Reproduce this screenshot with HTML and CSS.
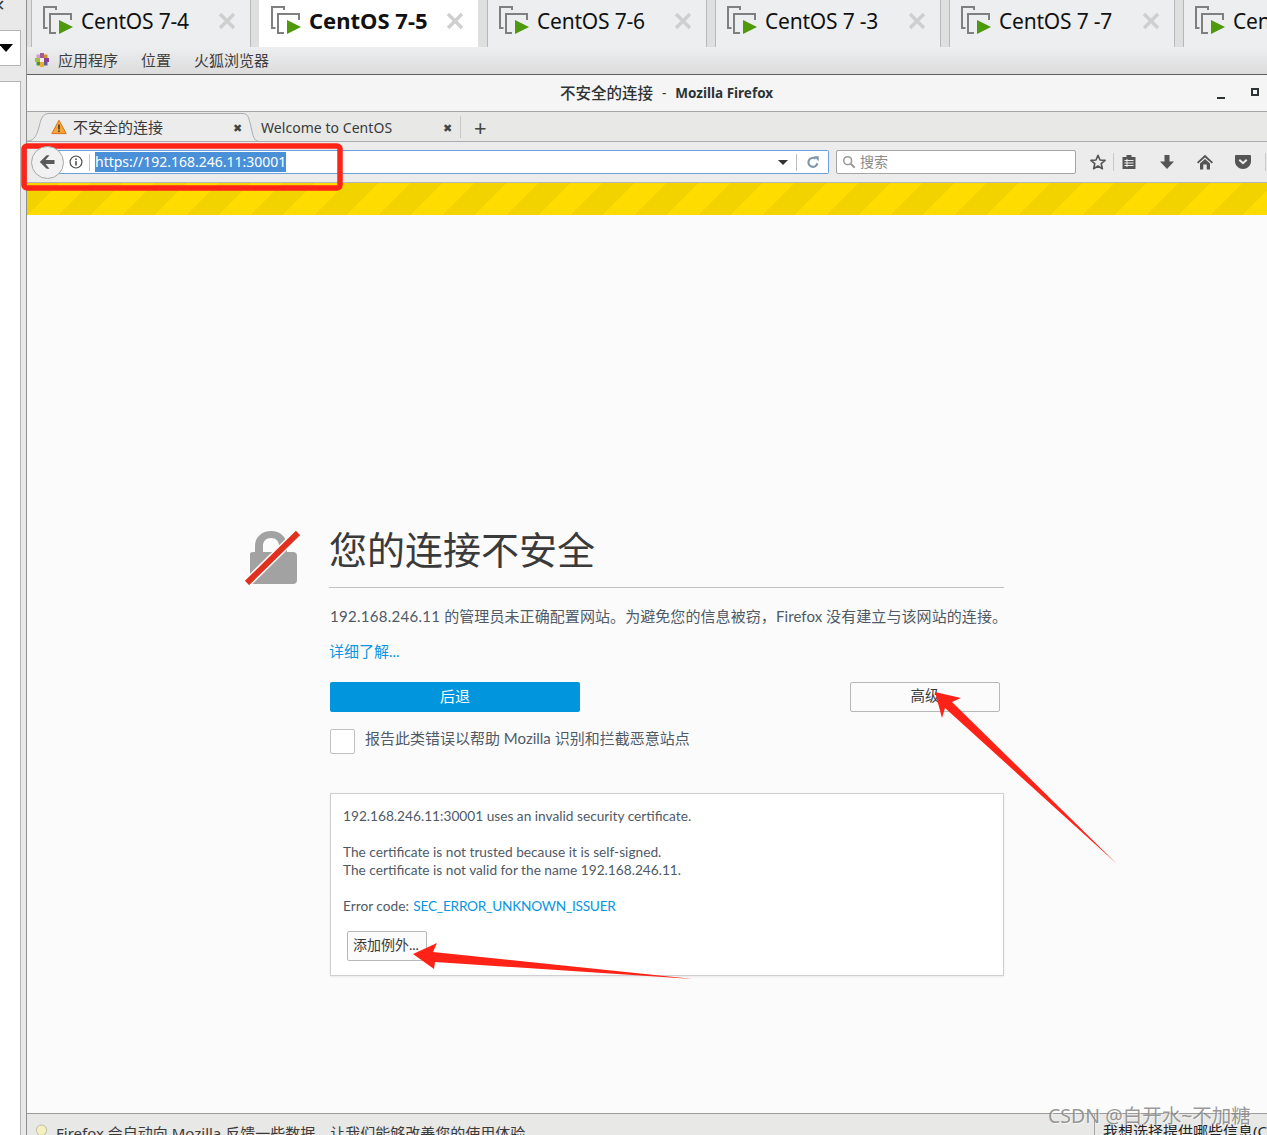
FILE: index.html
```html
<!DOCTYPE html>
<html lang="zh-CN">
<head>
<meta charset="utf-8">
<title>不安全的连接</title>
<link rel="stylesheet" href="styles.css">
</head>
<body>
<div class="desktop">
  <aside class="side">
    <div class="side-top"><span class="side-x">✕</span></div>
    <div class="side-select"><span class="side-caret"></span></div>
    <div class="side-gap"></div>
    <div class="side-panel"></div>
  </aside>
  <main class="main">
    <nav class="vmtabs">
      <div class="vmtab t1"><svg class="vmicon" viewBox="0 0 30 30"><use href="#vm"/></svg><span class="vmname">CentOS 7-4</span><svg class="vmclose" viewBox="0 0 18 18"><use href="#vmx"/></svg></div>
      <div class="vmtab t2"><svg class="vmicon" viewBox="0 0 30 30"><use href="#vm"/></svg><span class="vmname">CentOS 7-5</span><svg class="vmclose" viewBox="0 0 18 18"><use href="#vmx"/></svg></div>
      <div class="vmtab t3"><svg class="vmicon" viewBox="0 0 30 30"><use href="#vm"/></svg><span class="vmname">CentOS 7-6</span><svg class="vmclose" viewBox="0 0 18 18"><use href="#vmx"/></svg></div>
      <div class="vmtab t4"><svg class="vmicon" viewBox="0 0 30 30"><use href="#vm"/></svg><span class="vmname">CentOS 7 -3</span><svg class="vmclose" viewBox="0 0 18 18"><use href="#vmx"/></svg></div>
      <div class="vmtab t5"><svg class="vmicon" viewBox="0 0 30 30"><use href="#vm"/></svg><span class="vmname">CentOS 7 -7</span><svg class="vmclose" viewBox="0 0 18 18"><use href="#vmx"/></svg></div>
      <div class="vmtab t6"><svg class="vmicon" viewBox="0 0 30 30"><use href="#vm"/></svg><span class="vmname">CentOS</span></div>
    </nav>
    <div class="gnome">
      <svg class="gnome-logo" viewBox="0 0 14 14"><rect x="5" y="0" width="4" height="5" fill="#a25a9a"/><rect x="5" y="9" width="4" height="5" fill="#e6b02a"/><rect x="0" y="5" width="5" height="4" fill="#a6bd3c"/><rect x="9" y="5" width="5" height="4" fill="#8d3f8d"/><rect x="1.500" y="1.500" width="3.500" height="3.500" fill="#d79ac4"/><rect x="9" y="9" width="3.500" height="3.500" fill="#5c5c9e"/><rect x="1.500" y="9" width="3.500" height="3.500" fill="#4f8f3a"/><rect x="9" y="1.500" width="3.500" height="3.500" fill="#d0902a"/><rect x="5" y="5" width="4" height="4" fill="#eee"/></svg>
      <span class="gnome-item">应用程序</span><span class="gnome-item">位置</span><span class="gnome-item">火狐浏览器</span>
    </div>
    <section class="window">
      <header class="titlebar">
        <div class="title"><span class="title-cn">不安全的连接</span><span class="title-sep">-</span><span>Mozilla Firefox</span></div>
        <div class="winbtns"><span class="win-min"></span><span class="win-max"></span></div>
      </header>
      <div class="ff-tabs">
        <div class="ff-tab selected">
          <svg class="ff-tab-shape" viewBox="0 0 231 30" preserveAspectRatio="none"><path d="M0 29 C8 29 10 22 12 15 C14 6 16 1.500 22 1.500 H216 C221 1.500 222 6 224 15 C226 24 227 29 231 29" fill="#ececec" stroke="#a9adb0"/></svg>
          <svg class="warn" viewBox="0 0 16 16"><path d="M8 1.200 L15.200 14.600 H.8 Z" fill="#f4a63a" stroke="#d9741a" stroke-width="1" stroke-linejoin="round"/><rect x="7.200" y="5.500" width="1.600" height="5" fill="#4a3a2a"/><rect x="7.200" y="11.400" width="1.600" height="1.700" fill="#4a3a2a"/></svg>
          <span class="ff-tab-label">不安全的连接</span><span class="ff-x">✖</span>
        </div>
        <div class="ff-tab plain"><span class="ff-tab-label">Welcome to CentOS</span><span class="ff-x">✖</span></div>
        <span class="ff-new">+</span>
      </div>
      <div class="toolbar">
        <div class="backbtn"><svg viewBox="0 0 16 16" class="back-ico"><path d="M7.600 1.200 L.8 8 L7.600 14.800 H10.500 L6.500 10 H15.500 V6 H6.500 L10.500 1.200 Z" fill="#5a5a5a"/></svg></div>
        <div class="urlbar">
          <svg class="info" viewBox="0 0 16 16"><circle cx="8" cy="8" r="6.800" fill="none" stroke="#4a4a4a" stroke-width="1.300"/><rect x="7.100" y="7" width="1.800" height="5" fill="#4a4a4a"/><rect x="7.100" y="4" width="1.800" height="1.800" fill="#4a4a4a"/></svg>
          <span class="url-sep"></span>
          <span class="url"><span class="url-sel">https://192.168.246.11:30001</span></span>
          <span class="url-caret"></span>
          <span class="url-sep2"></span>
          <svg class="reload" viewBox="0 0 16 16"><path d="M13 9.500 A5.200 5.200 0 1 1 11 4.200" fill="none" stroke="#7d96ab" stroke-width="2.400"/><path d="M9 1.500 H14.500 V7 Z" fill="#7d96ab"/></svg>
        </div>
        <div class="searchbar">
          <svg class="glass" viewBox="0 0 16 16"><circle cx="6.500" cy="6.500" r="4.500" fill="none" stroke="#9a9a9a" stroke-width="1.800"/><path d="M10 10 L14.500 14.500" stroke="#9a9a9a" stroke-width="2.400"/></svg>
          <span class="search-ph">搜索</span>
        </div>
        <div class="tools">
          <svg class="tool star" viewBox="0 0 16 16"><path d="M8 1.300 L10 6 L15.100 6.400 L11.200 9.700 L12.400 14.700 L8 12 L3.600 14.700 L4.800 9.700 L.9 6.400 L6 6 Z" fill="none" stroke="#555" stroke-width="1.600" stroke-linejoin="round"/></svg>
          <span class="tool-sep"></span>
          <svg class="tool lib" viewBox="0 0 16 16"><path d="M1.500 3 H5.500 V1 H10.500 V3 H14.500 V15 H1.500 Z" fill="#555"/><path d="M3.500 6.500 H12.500 M3.500 9 H12.500 M3.500 11.500 H12.500 M6 5 V13" stroke="#eee" stroke-width="1"/></svg>
          <svg class="tool dl" viewBox="0 0 16 16"><path d="M5.500 1 H10.500 V7.500 H15 L8 15 L1 7.500 H5.500 Z" fill="#555"/></svg>
          <svg class="tool home" viewBox="0 0 16 16"><path d="M8 .8 L16 8.300 L14.800 9.600 L8 3.500 L1.200 9.600 L0 8.300 Z" fill="#555"/><path d="M3 9.500 L8 5 L13 9.500 V15.500 H9.700 V10.500 H6.300 V15.500 H3 Z" fill="#555"/></svg>
          <svg class="tool pocket" viewBox="0 0 16 16"><path d="M1 1 H15 Q16 1 16 2 V7.500 C16 11.500 12 15 8 15 C4 15 0 11.500 0 7.500 V2 Q0 1 1 1 Z" fill="#555"/><path d="M4.300 5.700 L8 9.200 L11.700 5.700" fill="none" stroke="#eee" stroke-width="2"/></svg>
          <span class="tool-sep end"></span>
        </div>
      </div>
      <div class="stripes"></div>
      <div class="content">
        <div class="errorpage">
          <svg class="lock" viewBox="0 0 56 56"><path d="M6 25 Q6 23 9 23 H11 V17 C11 8 18 2 27 2 C36 2 43 8 43 17 V23 H49 Q53 23 53 27 V51 Q53 55 49 55 H10 Q6 55 6 51 Z M19 23 H35 V17 C35 12 32 9 27 9 C22 9 19 12 19 17 Z" fill="#a2a2a2" fill-rule="evenodd"/><path d="M55 3 L3 54" stroke="#fbfbfb" stroke-width="9"/><path d="M54 4 L3 54" stroke="#e0301e" stroke-width="6"/></svg>
          <div class="err-body">
            <h1 class="err-title">您的连接不安全</h1>
            <p class="err-msg"><span class="ip">192.168.246.11</span> 的管理员未正确配置网站。为避免您的信息被窃，Firefox 没有建立与该网站的连接。</p>
            <p class="err-more">详细了解...</p>
            <div class="err-actions">
              <span class="btn-back">后退</span>
              <span class="btn-adv">高级</span>
            </div>
            <div class="err-report"><span class="checkbox"></span><span class="report-text">报告此类错误以帮助 Mozilla 识别和拦截恶意站点</span></div>
            <div class="cert">
              <p class="cert-line">192.168.246.11:30001 uses an invalid security certificate.</p>
              <p class="cert-line gap">The certificate is not trusted because it is self-signed.</p>
              <p class="cert-line">The certificate is not valid for the name 192.168.246.11.</p>
              <p class="cert-line gap">Error code: <span class="cert-code">SEC_ERROR_UNKNOWN_ISSUER</span></p>
              <span class="btn-except">添加例外...</span>
            </div>
          </div>
        </div>
      </div>
      <footer class="notice">
        <div class="notice-left">
          <svg class="bulb" viewBox="0 0 14 18"><path d="M7 1 C3.500 1 1.500 3.500 1.500 6.500 C1.500 9 3.500 10 4 12 H10 C10.500 10 12.500 9 12.500 6.500 C12.500 3.500 10.500 1 7 1 Z" fill="#f5f0c0" stroke="#b9b9a0"/></svg>
          <span class="notice-text">Firefox 会自动向 Mozilla 反馈一些数据，让我们能够改善您的使用体验。</span>
        </div>
        <div class="notice-btn">我想选择提供哪些信息(C)</div>
      </footer>
    </section>
  </main>
</div>
<svg class="annot" viewBox="0 0 1267 1135" aria-hidden="true">
  <defs>
    <g id="vm">
      <path d="M4.500 23 H1 V2 H13 V5 M13 28 H7 V9 H28 V15" fill="none" stroke="#808080" stroke-width="2"/>
      <path d="M16 15 L30 22 L16 29 Z" fill="#4f9a0c"/>
    </g>
    <path id="vmx" d="M2 2 L16 16 M16 2 L2 16" stroke="#cfcfcf" stroke-width="3.400" fill="none"/>
  </defs>
  <rect class="a-box" x="24" y="146" width="316" height="42" rx="3"/>
  <polygon class="a-arrow" points="935,692 961,698 952,702 1117,864 945,708 942,718"/>
  <polygon class="a-arrow" points="413,954 437,943 433,952 693,979 435,962 434,969"/>
</svg>
<div class="watermark">CSDN @白开水~不加糖</div>
</body>
</html>
```
FILE: styles.css
```css
* { box-sizing: border-box; }
html, body { margin: 0; padding: 0; height: 1135px; overflow: hidden; }
body { position: relative; font-family: "Noto Sans", "Noto Sans CJK SC", sans-serif; color: #333; background: #fff; }
p, h1 { margin: 0; }
.desktop { display: flex; height: 1135px; width: 1267px; overflow: hidden; }

.side { width: 27px; flex: none; display: flex; flex-direction: column; background: #e9e9e9; border-right: 1px solid #8f8f8f; }
.side-top { height: 30px; position: relative; overflow: hidden; }
.side-x { position: absolute; left: -8px; top: -6px; font-size: 16px; color: #333; }
.side-select { height: 36px; width: 21px; background: #fff; border: 1px solid #b5b5b5; border-left: 0; display: flex; align-items: center; }
.side-caret { width: 0; height: 0; border-left: 7px solid transparent; border-right: 7px solid transparent; border-top: 8px solid #000; margin-left: -1px; }
.side-gap { height: 15px; width: 21px; }
.side-panel { flex: 1; width: 21px; background: #fff; border: 1px solid #b5b5b5; border-left: 0; border-bottom: 0; }

.main { flex: 1; min-width: 0; display: flex; flex-direction: column; overflow: hidden; }

.vmtabs { height: 47px; flex: none; display: flex; padding-left: 4px; background: #dedfdf; overflow: hidden; }
.vmtab { flex: none; height: 47px; display: flex; align-items: center; padding-left: 11px; background: #eceef0; border-left: 1px solid #b9b9b9; border-right: 1px solid #b9b9b9; position: relative; }
.vmtab + .vmtab { margin-left: 8px; }
.t1 { width: 220px; }
.t2 { width: 219px; border: 0; padding-left: 12px; background: #fff; font-weight: 700; }
.t3 { width: 220px; margin-left: 9px !important; }
.t4 { width: 226px; }
.t5 { width: 226px; }
.t6 { width: 120px; }
.vmicon { width: 30px; height: 30px; flex: none; margin-top: -7px; }
.vmname { margin-left: 8px; font-size: 21px; color: #111; white-space: nowrap; line-height: 30px; margin-top: -6px; letter-spacing: -.2px; }
.t2 .vmname { font-size: 22px; letter-spacing: 0; margin-top: -7px; }
.vmclose { position: absolute; right: 14px; top: 12px; width: 18px; height: 18px; }

.gnome { height: 28px; flex: none; display: flex; align-items: center; padding: 0 0 2px 8px; background: linear-gradient(#edeef0, #dcdcdc); border-bottom: 1px solid #5e5e5e; font-size: 15px; color: #3e3e3e; }
.gnome-logo { width: 14px; height: 14px; margin-right: 9px; }
.gnome-item { margin-right: 23px; }

.window { flex: 1; min-height: 0; display: flex; flex-direction: column; background: #f5f5f5; }
.titlebar { height: 37px; flex: none; display: flex; align-items: center; position: relative; justify-content: center; padding-left: 40px; background: #f5f5f5; border-bottom: 1px solid #a5a5a5; font-size: 13.500px; font-weight: 700; color: #2e3436; }
.title { display: flex; align-items: center; }
.title-cn { font-size: 15.500px; font-weight: 500; margin-top: -2px; margin-left: -1px; }
.title-sep { margin: 0 9px; font-weight: 400; }
.winbtns { position: absolute; right: 0; top: 0; height: 36px; display: flex; align-items: center; }
.win-min { width: 8px; height: 2px; background: #2e3436; margin: 9px 26px 0 0; }
.win-max { width: 8px; height: 8px; border: 2px solid #2e3436; margin: -2px 8px 0 0; }

.ff-tabs { height: 30px; flex: none; display: flex; background: #e8e8e6; border-bottom: 1px solid #a9adb0; align-items: stretch; position: relative; }
.ff-tab { display: flex; align-items: center; position: relative; font-size: 14px; color: #3a3a3a; }
.ff-tab.selected { width: 231px; padding-left: 24px; z-index: 1; height: 30px; font-size: 15px; }
.ff-tab-shape { position: absolute; left: 0; top: 0; width: 100%; height: 100%; }
.ff-tab.selected .ff-tab-label { margin-top: -2px; }
.ff-tab.plain { width: 203px; padding-left: 3px; }
.ff-tab.plain .ff-tab-label { letter-spacing: .05px; margin-top: 2px; }
.plain::after { content: ""; position: absolute; right: 0; top: 4px; height: 22px; width: 1px; background: #c6c6c6; }
.warn { width: 16px; height: 16px; position: relative; margin-right: 6px; }
.ff-tab-label { position: relative; white-space: nowrap; }
.ff-x { position: absolute; font-size: 11px; color: #444; top: 10px; line-height: 12px; right: 16px; }
.ff-tab.plain .ff-x { right: 9px; }
.ff-new { font-size: 22px; line-height: 30px; color: #444; margin-left: 13px; font-weight: 400; }

.toolbar { height: 41px; flex: none; display: flex; align-items: center; padding-left: 4px; background: #ececec; border-bottom: 1px solid #b5b5b5; position: relative; }
.backbtn { width: 33px; height: 33px; flex: none; border-radius: 50%; border: 1px solid #a8a8a8; background: #f1f1f1; display: flex; align-items: center; justify-content: center; z-index: 1; margin-right: -6px; }
.back-ico { width: 16px; height: 16px; margin-left: -2px; }
.urlbar { width: 771px; height: 24px; flex: none; display: flex; align-items: center; background: #fff; border: 1px solid #6ca0dc; border-left: 0; border-radius: 0 2px 2px 0; padding-left: 11px; }
.info { width: 14px; height: 14px; flex: none; }
.url-sep { width: 1px; height: 17px; background: #c5c5c5; margin: 0 5px 0 6px; }
.url { flex: 1; font-size: 14px; color: #fff; line-height: 20px; }
.url-sel { background: #4a90d9; display: inline-block; height: 20px; }
.url-caret { width: 0; height: 0; border-left: 5px solid transparent; border-right: 5px solid transparent; border-top: 5px solid #333; margin-right: 8px; }
.url-sep2 { width: 1px; height: 17px; background: #bdbdbd; margin-right: 9px; }
.reload { width: 14px; height: 14px; margin-right: 8px; }
.searchbar { width: 240px; height: 24px; flex: none; margin-left: 7px; display: flex; align-items: center; background: #fff; border: 1px solid #a5a5a5; border-radius: 2px; padding-left: 5px; }
.glass { width: 14px; height: 14px; }
.search-ph { font-size: 14px; color: #8c8c8c; margin: -3px 0 0 4px; }
.tools { display: flex; align-items: center; margin-left: 14px; }
.tool { width: 16px; height: 16px; flex: none; }
.tool-sep { width: 1px; height: 18px; background: #c9c9c9; margin: 0 7px; flex: none; }
.tool-sep.end { margin: 0 0 0 14px; }
.dl, .home, .pocket { margin-left: 22px; }

.stripes { height: 32px; flex: none; background: repeating-linear-gradient(135deg, #f2d300 0 22.630px, #ffdc00 22.630px 45.250px); }
.content { flex: 1; min-height: 0; background: #fbfbfb; padding: 0 0 0 217px; overflow: hidden; }
.errorpage { display: flex; padding-top: 300px; }
.lock { width: 56px; height: 56px; flex: none; margin: 14px 30px 0 0; }
.err-body { width: 674px; flex: none; font-family: "Lato", "Noto Sans CJK SC", sans-serif; }
.err-title { font-size: 38px; font-weight: 400; line-height: 66px; height: 73px; color: #3a3a3a; border-bottom: 1px solid #c1c1c1; font-family: "Noto Sans CJK SC", sans-serif; margin-left: -1px; padding-left: 0; }
.err-msg { font-size: 15px; color: #4f5a66; line-height: 22px; margin-top: 17px; white-space: nowrap; letter-spacing: .08px; }
.ip { letter-spacing: .28px; }
.err-more { font-size: 15px; color: #0996e0; line-height: 22px; margin-top: 13px; margin-left: -1px; }
.err-actions { display: flex; justify-content: space-between; margin-top: 20px; padding-right: 4px; }
.btn-back { width: 250px; height: 30px; background: #0095dd; color: #fff; text-align: center; font-size: 15px; line-height: 28px; border-radius: 2px; }
.btn-adv { width: 150px; height: 30px; background: #fbfbfb; border: 1px solid #b8b8b8; border-radius: 2px; text-align: center; font-size: 14.500px; line-height: 26px; color: #3a3a3a; }
.err-report { display: flex; align-items: center; gap: 10px; margin-top: 17px; font-size: 15px; color: #4f5a66; height: 25px; }
.report-text { margin-top: -8px; }
.checkbox { width: 25px; height: 25px; background: #fff; border: 1px solid #c1c1c1; border-radius: 2px; flex: none; }
.cert { margin-top: 39px; height: 183px; background: #fff; border: 1px solid #cfcfcf; box-shadow: 0 1px 2px rgba(0,0,0,.08); padding: 13px 12px 0; font-size: 13.700px; color: #4f5a66; line-height: 18px; position: relative; }
.cert-line { white-space: nowrap; }
.cert-line.gap { margin-top: 18px; }
.cert-code { color: #0996e0; letter-spacing: -.25px; margin-left: 1px; }
.btn-except { display: block; width: 80px; height: 30px; margin: 16px 0 0 4px; background: #fbfbfb; border: 1px solid #b8b8b8; border-radius: 2px; font-size: 14px; line-height: 25px; padding-left: 5px; color: #3a3a3a; white-space: nowrap; }

.notice { height: 22px; flex: none; display: flex; justify-content: space-between; background: #e8e8e6; border-top: 1px solid #9c9c9c; overflow: hidden; }
.notice-left { display: flex; align-items: flex-start; padding: 10px 0 0 8px; font-size: 15px; color: #3a3a3a; line-height: 18px; }
.bulb { width: 13px; height: 17px; flex: none; margin-right: 8px; }
.notice-text { white-space: nowrap; }
.notice-btn { width: 175px; margin-right: -2px; border-left: 1px solid #a5a5a5; padding: 8px 0 0 8px; font-size: 15px; color: #222; line-height: 18px; white-space: nowrap; overflow: hidden; flex: none; }

.annot { position: absolute; left: 0; top: 0; width: 1267px; height: 1135px; pointer-events: none; }
.a-box { fill: none; stroke: #ff2418; stroke-width: 5.500; }
.a-arrow { fill: #ff2317; }
.watermark { position: absolute; left: 1048px; top: 1102px; font-size: 19.500px; color: rgba(120,120,120,.75); text-shadow: 1px 1px 0 rgba(255,255,255,.6); line-height: 28px; white-space: nowrap; }
```
